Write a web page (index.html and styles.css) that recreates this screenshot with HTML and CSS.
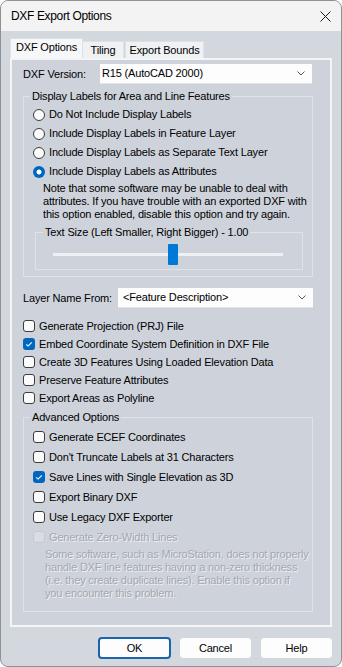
FILE: index.html
```html
<!DOCTYPE html>
<html>
<head>
<meta charset="utf-8">
<link rel="stylesheet" href="styles.css">
</head>
<body>
<div class="window">
  <div class="titlebar">
    <span class="title">DXF Export Options</span>
    <svg class="close" width="11" height="11" viewBox="0 0 11 11"><path d="M0.5 0.5L10.5 10.5M10.5 0.5L0.5 10.5" stroke="#1b1b1b" stroke-width="1"/></svg>
  </div>
  <div class="client">
    <div class="tabs">
      <div class="tab active">DXF Options</div>
      <div class="tab tiling">Tiling</div>
      <div class="tab bounds">Export Bounds</div>
    </div>
    <div class="panel">
      <div class="field-row version-row">
        <span class="field-label version-label">DXF Version:</span>
        <div class="select version-select">
          <span>R15 (AutoCAD 2000)</span>
          <svg class="chev" width="8" height="5" viewBox="0 0 8 5"><path d="M0.5 0.5L4 4L7.5 0.5" fill="none" stroke="#5a5a5a" stroke-width="1"/></svg>
        </div>
      </div>

      <fieldset class="group">
        <legend>Display Labels for Area and Line Features</legend>
        <div class="opt-row"><span class="radio"></span>Do Not Include Display Labels</div>
        <div class="opt-row"><span class="radio"></span>Include Display Labels in Feature Layer</div>
        <div class="opt-row"><span class="radio"></span>Include Display Labels as Separate Text Layer</div>
        <div class="opt-row"><span class="radio checked"></span>Include Display Labels as Attributes</div>
        <p class="note">Note that some software may be unable to deal with<br>attributes. If you have trouble with an exported DXF with<br>this option enabled, disable this option and try again.</p>
        <fieldset class="slider-group">
          <legend>Text Size (Left Smaller, Right Bigger) - 1.00</legend>
          <div class="slider"><div class="thumb"></div></div>
        </fieldset>
      </fieldset>

      <div class="field-row layer-row">
        <span class="field-label layer-label">Layer Name From:</span>
        <div class="select layer-select">
          <span>&lt;Feature Description&gt;</span>
          <svg class="chev" width="8" height="5" viewBox="0 0 8 5"><path d="M0.5 0.5L4 4L7.5 0.5" fill="none" stroke="#5a5a5a" stroke-width="1"/></svg>
        </div>
      </div>

      <div class="checks">
        <div class="chk-row"><span class="box"></span>Generate Projection (PRJ) File</div>
        <div class="chk-row"><span class="box checked"><svg width="12" height="12" viewBox="0 0 12 12"><path d="M3.2 6.3L5.1 8.1L8.8 4.3" fill="none" stroke="#fff" stroke-width="1.1"/></svg></span>Embed Coordinate System Definition in DXF File</div>
        <div class="chk-row"><span class="box"></span>Create 3D Features Using Loaded Elevation Data</div>
        <div class="chk-row"><span class="box"></span>Preserve Feature Attributes</div>
        <div class="chk-row"><span class="box"></span>Export Areas as Polyline</div>
      </div>

      <fieldset class="group advanced">
        <legend>Advanced Options</legend>
        <div class="adv-row"><span class="box"></span>Generate ECEF Coordinates</div>
        <div class="adv-row"><span class="box"></span>Don't Truncate Labels at 31 Characters</div>
        <div class="adv-row"><span class="box checked"><svg width="12" height="12" viewBox="0 0 12 12"><path d="M3.2 6.3L5.1 8.1L8.8 4.3" fill="none" stroke="#fff" stroke-width="1.1"/></svg></span>Save Lines with Single Elevation as 3D</div>
        <div class="adv-row"><span class="box"></span>Export Binary DXF</div>
        <div class="adv-row"><span class="box"></span>Use Legacy DXF Exporter</div>
        <div class="adv-row disabled"><span class="box"></span>Generate Zero-Width Lines</div>
        <p class="note disabled-note">Some software, such as MicroStation, does not properly<br>handle DXF line features having a non-zero thickness<br>(i.e. they create duplicate lines). Enable this option if<br>you encounter this problem.</p>
      </fieldset>
    </div>

    <div class="buttons">
      <button class="btn default">OK</button>
      <button class="btn">Cancel</button>
      <button class="btn">Help</button>
    </div>
  </div>
</div>
</body>
</html>
```

FILE: styles.css
```css
* { box-sizing: border-box; }
html, body { margin: 0; padding: 0; }
body {
  width: 342px;
  height: 667px;
  background: #ffffff;
  font-family: "Liberation Sans", Arial, sans-serif;
  font-size: 11px;
  line-height: 13px;
  letter-spacing: -0.17px;
  color: #000;
}
.window {
  width: 342px;
  height: 667px;
  border: 1px solid #8e9297;
  border-radius: 8px;
  overflow: hidden;
  background: #d3d8df;
  display: flex;
  flex-direction: column;
}
.titlebar {
  height: 30px;
  flex: none;
  background: #f3f3f3;
  display: flex;
  align-items: center;
  justify-content: space-between;
  padding: 0 10px 0 10px;
}
.title {
  font-size: 12px;
  letter-spacing: -0.35px;
  color: #000;
}
.close { display: block; }

.client {
  flex: 1;
  display: flex;
  flex-direction: column;
  padding: 7px 0 0 9px;
}
.tabs {
  display: flex;
  align-items: flex-end;
  height: 20px;
  flex: none;
}
.tab {
  height: 17px;
  background: #eff1f3;
  border: 1px solid #dde0e4;
  border-bottom: none;
  display: flex;
  align-items: center;
  justify-content: center;
  padding-top: 1px;
  white-space: nowrap;
}
.tab.active {
  width: 73px;
  height: 20px;
  background: #f6f7f8;
  padding-top: 0;
  padding-bottom: 2px;
}
.tab.tiling { width: 41px; border-left: none; }
.tab.bounds { width: 79px; margin-left: 1px; }

.panel {
  width: 322px;
  flex: none;
  border: 2px solid #f4f5f7;
  background: #ced3db;
  padding: 0 0 13px 11px;
  white-space: nowrap;
}

.field-row {
  display: flex;
  align-items: center;
  height: 20px;
}
.version-row { margin-top: 4px; }
.layer-row { margin-top: 11px; }
.version-label { width: 77px; }
.layer-label { width: 95px; }
.select {
  height: 20px;
  background: #fdfdfd;
  border-bottom: 1px solid #e2e4e8;
  display: flex;
  align-items: center;
  justify-content: space-between;
  padding: 0 7px 0 2px;
}
.version-select { width: 212px; }
.layer-select { width: 195px; padding-left: 5px; }
.chev { display: block; }

fieldset { margin: 0; min-width: 0; }
.group {
  width: 290px;
  margin-top: 6px;
  border: 1px solid #dfe2e7;
  padding: 2px 0 6px 9px;
}
.group legend {
  margin-left: -3px;
  padding: 0 2px;
  line-height: 13px;
}
.opt-row, .adv-row {
  display: flex;
  align-items: center;
  height: 19px;
}
.adv-row { height: 20px; }
.radio {
  width: 12px;
  height: 12px;
  border-radius: 50%;
  border: 1px solid #3c3c3c;
  background: #fbfbfb;
  margin-right: 4px;
  flex: none;
}
.radio.checked {
  border: none;
  background: radial-gradient(circle, #ffffff 0 2.2px, #0067c0 2.8px);
}
.note {
  margin: 1px 0 0 10px;
  line-height: 13px;
}
.slider-group {
  width: 268px;
  margin: 5px 0 0 2px;
  border: 1px solid #dfe2e7;
  padding: 5px 0 4px 0;
}
.slider-group legend {
  margin-left: 7px;
  padding: 0 2px;
}
.slider {
  height: 21px;
  background: linear-gradient(#eef0f3, #eef0f3) no-repeat 17px 9px / 230px 3px;
  display: flex;
}
.thumb {
  width: 10px;
  height: 21px;
  margin-left: 132px;
  background: #0078d7;
  border-radius: 1px;
}

.checks {
  margin-top: 9px;
}
.chk-row {
  display: flex;
  align-items: center;
  height: 18px;
}
.box {
  width: 12px;
  height: 12px;
  border: 1px solid #3c3c3c;
  border-radius: 3px;
  background: #fbfbfb;
  margin-right: 4px;
  flex: none;
  display: flex;
}
.box.checked {
  border: none;
  background: #0067c0;
}
.box svg { display: block; }

.advanced {
  margin-top: 4px;
  padding: 3px 0 11px 9px;
}
.disabled {
  color: #a3a8b0;
  text-shadow: 1px 1px 0 #eef0f3;
}
.disabled .box {
  border-color: #c6cad0;
  background: #d9dde2;
}
.disabled-note {
  margin: 1px 0 0 12px;
  color: #a3a8b0;
  text-shadow: 1px 1px 0 #eef0f3;
}

.buttons {
  display: flex;
  justify-content: flex-end;
  gap: 8px;
  margin-top: 10px;
  margin-right: 8px;
}
.btn {
  width: 73px;
  height: 22px;
  font-family: "Liberation Sans", Arial, sans-serif;
  font-size: 11px;
  letter-spacing: -0.17px;
  color: #000;
  background: #fdfdfd;
  border: 1px solid #d3d5d8;
  border-radius: 4px;
  padding: 0;
}
.btn.default {
  border: 2px solid #1a63ad;
}
```
